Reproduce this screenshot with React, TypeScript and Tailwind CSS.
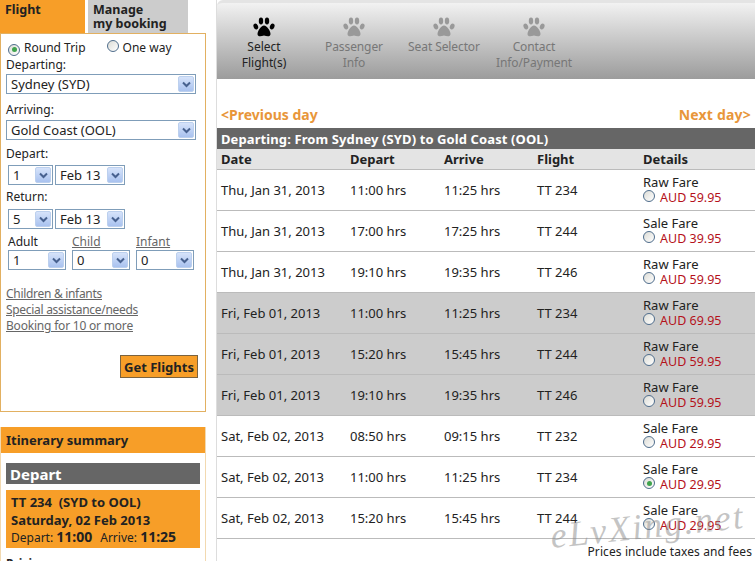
const Select = ({ value, className }: { value: string; className: string }) => (
  <div className={`flex h-[20px] items-center justify-between border border-[#7f9db9] bg-white pl-[4px] pr-[1px] text-[13px] text-[#222] ${className}`}>
    <span>{value}</span>
    <span className="flex h-[16px] w-[16px] items-center justify-center rounded-[2px] border border-[#bcd0ee] bg-gradient-to-b from-[#d6e3fa] to-[#a9c2ef]">
      <svg width="9" height="7" viewBox="0 0 9 7">
        <path d="M1 1.5 L4.5 5 L8 1.5" fill="none" stroke="#47618f" strokeWidth="2" />
      </svg>
    </span>
  </div>
);

const Radio = ({ checked }: { checked?: boolean }) => (
  <span className="inline-flex h-[12px] w-[12px] shrink-0 items-center justify-center rounded-full border border-[#4f6d8c] bg-gradient-to-br from-[#dcdcd6] to-white">
    {checked && <span className="h-[5px] w-[5px] rounded-full bg-[#3fa34d]" />}
  </span>
);

const Paw = ({ color }: { color: string }) => (
  <svg width="22" height="22" viewBox="0 0 22 22" fill={color}>
    <ellipse cx="8" cy="4" rx="2.2" ry="3.4" />
    <ellipse cx="14" cy="4" rx="2.2" ry="3.4" />
    <ellipse cx="2.8" cy="9.5" rx="2.2" ry="3" transform="rotate(-25 2.8 9.5)" />
    <ellipse cx="19.2" cy="9.5" rx="2.2" ry="3" transform="rotate(25 19.2 9.5)" />
    <path d="M11 8.5 C14 8.5 17.5 14 17.5 17 C17.5 20 14 19.5 11 18.5 C8 19.5 4.5 20 4.5 17 C4.5 14 8 8.5 11 8.5 Z" />
  </svg>
);

const steps = [
  { top: "Select", bottom: "Flight(s)", active: true },
  { top: "Passenger", bottom: "Info", active: false },
  { top: "Seat Selector", bottom: "", active: false },
  { top: "Contact", bottom: "Info/Payment", active: false },
];

const rows = [
  { date: "Thu, Jan 31, 2013", depart: "11:00 hrs", arrive: "11:25 hrs", flight: "TT 234", fare: "Raw Fare", price: "AUD 59.95" },
  { date: "Thu, Jan 31, 2013", depart: "17:00 hrs", arrive: "17:25 hrs", flight: "TT 244", fare: "Sale Fare", price: "AUD 39.95" },
  { date: "Thu, Jan 31, 2013", depart: "19:10 hrs", arrive: "19:35 hrs", flight: "TT 246", fare: "Raw Fare", price: "AUD 59.95" },
  { date: "Fri, Feb 01, 2013", depart: "11:00 hrs", arrive: "11:25 hrs", flight: "TT 234", fare: "Raw Fare", price: "AUD 69.95", shaded: true },
  { date: "Fri, Feb 01, 2013", depart: "15:20 hrs", arrive: "15:45 hrs", flight: "TT 244", fare: "Raw Fare", price: "AUD 59.95", shaded: true },
  { date: "Fri, Feb 01, 2013", depart: "19:10 hrs", arrive: "19:35 hrs", flight: "TT 246", fare: "Raw Fare", price: "AUD 59.95", shaded: true },
  { date: "Sat, Feb 02, 2013", depart: "08:50 hrs", arrive: "09:15 hrs", flight: "TT 232", fare: "Sale Fare", price: "AUD 29.95" },
  { date: "Sat, Feb 02, 2013", depart: "11:00 hrs", arrive: "11:25 hrs", flight: "TT 234", fare: "Sale Fare", price: "AUD 29.95", checked: true },
  { date: "Sat, Feb 02, 2013", depart: "15:20 hrs", arrive: "15:45 hrs", flight: "TT 244", fare: "Sale Fare", price: "AUD 29.95" },
];

const App = () => {
  return (
    <div className="relative flex h-[561px] w-[755px] overflow-hidden bg-white font-['Noto_Sans','DejaVu_Sans',sans-serif] text-[12px] leading-[16px] text-[#222]">
      {/*Left*/}
      <div className="w-[216px] shrink-0">
        <div className="flex h-[33px] text-[12.5px] font-bold leading-[14px]">
          <div className="w-[85px] bg-[#f79e28] pl-[5px] pt-[3px]">Flight</div>
          <div className="ml-[3px] w-[100px] bg-[#cccccc] pl-[5px] pt-[3px]">
            Manage
            <br />
            my booking
          </div>
        </div>

        <div className="flex h-[379px] w-[206px] flex-col border border-[#e2b061] pl-[5px] pt-[6px]">
          <div className="flex items-center">
            <span className="ml-[2px] mr-[4px]"><Radio checked /></span>
            <span>Round Trip</span>
            <span className="ml-[21px] mr-[4px]"><Radio /></span>
            <span>One way</span>
          </div>
          <div className="mt-[1px]">Departing:</div>
          <Select value="Sydney (SYD)" className="mt-[1px] w-[190px]" />
          <div className="mt-[8px]">Arriving:</div>
          <Select value="Gold Coast (OOL)" className="mt-[2px] w-[190px]" />
          <div className="mt-[6px]">Depart:</div>
          <div className="mt-[3px] flex gap-[2px] pl-[2px]">
            <Select value="1" className="w-[45px]" />
            <Select value="Feb 13" className="w-[70px]" />
          </div>
          <div className="mt-[4px]">Return:</div>
          <div className="mt-[4px] flex gap-[2px] pl-[2px]">
            <Select value="5" className="w-[45px]" />
            <Select value="Feb 13" className="w-[70px]" />
          </div>
          <div className="mt-[5px] flex gap-[6px] pl-[2px]">
            <div className="w-[58px]">
              <div>Adult</div>
              <Select value="1" className="w-[58px]" />
            </div>
            <div className="w-[58px]">
              <div className="text-[#666] underline">Child</div>
              <Select value="0" className="w-[58px]" />
            </div>
            <div className="w-[58px]">
              <div className="text-[#666] underline">Infant</div>
              <Select value="0" className="w-[58px]" />
            </div>
          </div>
          <div className="mt-[16px] tracking-[-0.3px] text-[#666] underline">Children &amp; infants</div>
          <div className="tracking-[-0.3px] text-[#666] underline">Special assistance/needs</div>
          <div className="tracking-[-0.2px] text-[#666] underline">Booking for 10 or more</div>
          <div className="mt-[21px] flex justify-end pr-[7px]">
            <div className="flex h-[23px] w-[78px] items-center justify-center border border-[#7a6340] bg-[#f79e28] text-[13px] font-bold">
              Get Flights
            </div>
          </div>
        </div>

        <div className="mt-[15px] w-[206px] border-x border-[#f2d9b0]">
          <div className="flex h-[26px] items-center bg-[#f79e28] pl-[5px] text-[13px] font-bold">Itinerary summary</div>
          <div className="px-[5px] pt-[10px]">
            <div className="flex h-[21px] items-center bg-[#666666] pl-[4px] text-[15px] font-bold text-white">Depart</div>
            <div className="mt-[6px] h-[58px] bg-[#f79e28] pl-[5px] pt-[3px]">
              <div className="text-[13px] font-bold leading-[18px]">TT 234 &nbsp;(SYD to OOL)</div>
              <div className="text-[13px] font-bold leading-[18px]">Saturday, 02 Feb 2013</div>
              <div className="leading-[16px]">
                Depart: <span className="text-[14px] font-bold">11:00</span>
                <span className="ml-[8px]">Arrive:</span> <span className="text-[14px] font-bold">11:25</span>
              </div>
            </div>
            <div className="mt-[8px] font-bold">Pricing</div>
          </div>
        </div>
      </div>

      {/*Right*/}
      <div className="flex-1 border-l border-[#dddddd]">
        <div className="flex h-[79px] items-start rounded-tl-[6px] border-t-[3px] border-[#e4e4e4] bg-gradient-to-b from-[#f2f2f2] to-[#9c9c9c] pl-[7px] pt-[14px]">
          {steps.map((step, index) => (
            <div key={index} className={`mr-[10px] flex w-[80px] flex-col items-center text-center ${step.active ? "text-[#222]" : "text-[#777] tracking-[-0.1px]"}`}>
              <Paw color={step.active ? "#000000" : "#999999"} />
              <div className="whitespace-nowrap">{step.top}</div>
              <div className="whitespace-nowrap">{step.bottom}</div>
            </div>
          ))}
        </div>

        <div className="flex h-[49px] items-end justify-between px-[4px] pb-[5px] text-[14px] font-bold text-[#e8963a]">
          <span>&lt;Previous day</span>
          <span className="tracking-[0.2px]">Next day&gt;</span>
        </div>

        <div className="flex h-[21px] items-center bg-[#666666] pl-[4px] text-[13px] font-bold tracking-[0.1px] text-white">
          Departing: From Sydney (SYD) to Gold Coast (OOL)
        </div>
        <div className="flex h-[21px] items-center border-b border-[#bbbbbb] bg-[#e4e4e4] pl-[4px] text-[13px] font-bold">
          <span className="w-[129px]">Date</span>
          <span className="w-[94px]">Depart</span>
          <span className="w-[93px]">Arrive</span>
          <span className="w-[106px]">Flight</span>
          <span>Details</span>
        </div>

        {rows.map((row, index) => (
          <div key={index} className={`flex h-[41px] items-center border-b border-[#bbbbbb] pl-[4px] text-[13px] ${row.shaded ? "bg-[#cccccc]" : "bg-white"}`}>
            <span className="w-[129px]">{row.date}</span>
            <span className="w-[94px]">{row.depart}</span>
            <span className="w-[93px]">{row.arrive}</span>
            <span className="w-[106px]">{row.flight}</span>
            <div>
              <div className="leading-[15px]">{row.fare}</div>
              <div className="flex items-center leading-[15px]">
                <span className="-mt-[3px] flex"><Radio checked={row.checked} /></span>
                <span className="ml-[5px] text-[12.5px] text-[#b5121b]">{row.price}</span>
              </div>
            </div>
          </div>
        ))}

        <div className="pr-[3px] pt-[5px] text-right tracking-[0.1px]">Prices include taxes and fees</div>
      </div>

      {/*Watermark*/}
      <div className="absolute left-[550px] top-[506px] -rotate-[6deg] font-['Liberation_Serif',serif] text-[36px] italic leading-[40px] tracking-[2px] text-[#8a8a8a]/50">
        eLvXing.net
      </div>
    </div>
  );
};

export default App;
